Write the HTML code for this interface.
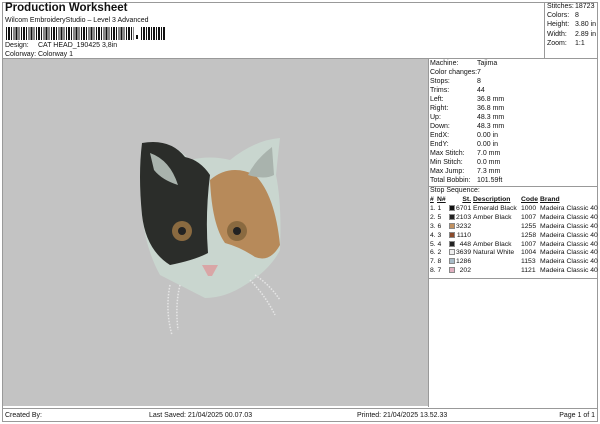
<!DOCTYPE html>
<html><head><style>
*{margin:0;padding:0;box-sizing:border-box}
body{width:600px;height:424px;background:#fff;font-family:"Liberation Sans",Arial,sans-serif;font-size:7px;color:#111;position:relative;overflow:hidden}
.a{position:absolute;white-space:nowrap}
.frame{position:absolute;left:2px;top:2px;width:596px;height:420px;border:1px solid #999}
.gray{position:absolute;left:3px;top:59px;width:425px;height:347px;background:#c3c3c3}
.r{position:absolute;white-space:nowrap;height:9px;line-height:9px}
.sw{position:absolute;width:6px;height:6px;border:1px solid #888;top:1px;left:19px}
</style></head><body>
<div class="frame"></div>
<div class="a" style="left:5px;top:2px;font-size:11.5px;font-weight:bold">Production Worksheet</div>
<div class="a" style="left:5px;top:17px">Wilcom EmbroideryStudio – Level 3 Advanced</div>
<div class="a" style="left:6px;top:27px;width:128px;height:13px;background:repeating-linear-gradient(90deg,#111 0 1px,#fff 1px 2px,#111 2px 4px,#fff 4px 5px,#111 5px 6px,#fff 6px 7.5px)"></div>
<div class="a" style="left:136px;top:35px;width:2px;height:4px;background:#111"></div>
<div class="a" style="left:141px;top:27px;width:25px;height:13px;background:repeating-linear-gradient(90deg,#111 0 1px,#fff 1px 2px,#111 2px 4px,#fff 4px 5px)"></div>
<div class="a" style="left:5px;top:42px">Design:</div><div class="a" style="left:38px;top:42px">CAT HEAD_190425 3,8in</div>
<div class="a" style="left:5px;top:51px">Colorway:</div><div class="a" style="left:38px;top:51px">Colorway 1</div>
<div class="a" style="left:544px;top:2px;width:1px;height:56px;background:#999"></div>
<div class="a" style="left:2px;top:58px;width:596px;height:1px;background:#999"></div>
<div style="position:absolute;left:547px;top:2px;line-height:9.2px">Stitches:<br>Colors:<br>Height:<br>Width:<br>Zoom:</div>
<div style="position:absolute;left:575px;top:2px;line-height:9.2px">18723<br>8<br>3.80 in<br>2.89 in<br>1:1</div>
<div class="gray"></div>
<div class="a" style="left:428px;top:59px;width:1px;height:348px;background:#999"></div>
<svg class="a" style="left:130px;top:135px" width="160" height="205" viewBox="0 0 160 205">
<path d="M12 8 Q8 40 12 80 Q16 115 30 140 L75 163 Q95 163 115 150 Q140 135 150 115 Q152 70 146 40 Q148 20 150 3 Q125 5 100 25 Q80 20 60 25 Q40 3 12 8Z" fill="#c9d6cf"/>
<path d="M12 8 Q8 40 12 80 Q16 115 40 130 Q65 125 78 118 Q75 80 80 40 Q70 25 55 22 Q40 3 12 8Z" fill="#2b2d2a"/>
<path d="M80 45 Q100 28 125 40 Q145 60 150 110 Q140 128 125 122 Q110 112 95 108 Q82 90 80 45Z" fill="#b78a5a"/>
<path d="M20 18 Q40 25 48 50 Q32 45 24 35Z" fill="#a9b3ad"/><path d="M142 12 Q125 25 118 40 Q135 45 144 40Z" fill="#a9b3ad"/>
<circle cx="52" cy="96" r="10" fill="#8a6a40"/><circle cx="52" cy="96" r="4" fill="#222"/>
<circle cx="107" cy="96" r="10" fill="#8a6a40"/><circle cx="107" cy="96" r="4" fill="#222"/>
<path d="M72 130 L88 130 L82 141 L78 141Z" fill="#d9a6a6"/>
<path d="M40 150 Q35 175 42 200 M50 150 Q45 170 48 195 M120 145 Q135 160 145 180 M125 140 Q140 150 150 165" stroke="#e6e6e6" stroke-width="1.5" fill="none" stroke-dasharray="1.5 1.5"/>
</svg>
<div style="position:absolute;left:430px;top:59px;line-height:9px">Machine:<br>Color changes:<br>Stops:<br>Trims:<br>Left:<br>Right:<br>Up:<br>Down:<br>EndX:<br>EndY:<br>Max Stitch:<br>Min Stitch:<br>Max Jump:<br>Total Bobbin:</div>
<div style="position:absolute;left:477px;top:59px;line-height:9px">Tajima<br>7<br>8<br>44<br>36.8 mm<br>36.8 mm<br>48.3 mm<br>48.3 mm<br>0.00 in<br>0.00 in<br>7.0 mm<br>0.0 mm<br>7.3 mm<br>101.59ft</div>
<div class="a" style="left:428px;top:186px;width:170px;height:1px;background:#999"></div>
<div class="a" style="left:430px;top:187px">Stop Sequence:</div>
<div style="position:absolute;left:430px;top:195px;width:168px;font-size:6.8px">
<div class="r" style="top:0;left:0;font-weight:bold;text-decoration:underline">#</div>
<div class="r" style="top:0;left:7px;font-weight:bold;text-decoration:underline">N#</div>
<div class="r" style="top:0;left:30px;width:11px;text-align:right;font-weight:bold;text-decoration:underline">St.</div>
<div class="r" style="top:0;left:43px;font-weight:bold;text-decoration:underline">Description</div>
<div class="r" style="top:0;left:91px;font-weight:bold;text-decoration:underline">Code</div>
<div class="r" style="top:0;left:110px;font-weight:bold;text-decoration:underline">Brand</div>
</div>
<div style="position:absolute;left:430px;top:204px;width:168px;font-size:6.8px">
<div style="position:relative;height:8.9px;line-height:8.9px"><span class="r" style="left:0">1. 1</span><span class="sw" style="background:#111"></span><span class="r" style="left:26px;width:15px;text-align:right">6701</span><span class="r" style="left:43px">Emerald Black</span><span class="r" style="left:91px">1000</span><span class="r" style="left:110px">Madeira Classic 40</span></div>
<div style="position:relative;height:8.9px;line-height:8.9px"><span class="r" style="left:0">2. 5</span><span class="sw" style="background:#222"></span><span class="r" style="left:26px;width:15px;text-align:right">2103</span><span class="r" style="left:43px">Amber Black</span><span class="r" style="left:91px">1007</span><span class="r" style="left:110px">Madeira Classic 40</span></div>
<div style="position:relative;height:8.9px;line-height:8.9px"><span class="r" style="left:0">3. 6</span><span class="sw" style="background:#c09060"></span><span class="r" style="left:26px;width:15px;text-align:right">3232</span><span class="r" style="left:91px">1255</span><span class="r" style="left:110px">Madeira Classic 40</span></div>
<div style="position:relative;height:8.9px;line-height:8.9px"><span class="r" style="left:0">4. 3</span><span class="sw" style="background:#8a4a2a"></span><span class="r" style="left:26px;width:15px;text-align:right">1110</span><span class="r" style="left:91px">1258</span><span class="r" style="left:110px">Madeira Classic 40</span></div>
<div style="position:relative;height:8.9px;line-height:8.9px"><span class="r" style="left:0">5. 4</span><span class="sw" style="background:#222"></span><span class="r" style="left:26px;width:15px;text-align:right">448</span><span class="r" style="left:43px">Amber Black</span><span class="r" style="left:91px">1007</span><span class="r" style="left:110px">Madeira Classic 40</span></div>
<div style="position:relative;height:8.9px;line-height:8.9px"><span class="r" style="left:0">6. 2</span><span class="sw" style="background:#eee"></span><span class="r" style="left:26px;width:15px;text-align:right">3639</span><span class="r" style="left:43px">Natural White</span><span class="r" style="left:91px">1004</span><span class="r" style="left:110px">Madeira Classic 40</span></div>
<div style="position:relative;height:8.9px;line-height:8.9px"><span class="r" style="left:0">7. 8</span><span class="sw" style="background:#a8bcc8"></span><span class="r" style="left:26px;width:15px;text-align:right">1286</span><span class="r" style="left:91px">1153</span><span class="r" style="left:110px">Madeira Classic 40</span></div>
<div style="position:relative;height:8.9px;line-height:8.9px"><span class="r" style="left:0">8. 7</span><span class="sw" style="background:#e0b0c0"></span><span class="r" style="left:26px;width:15px;text-align:right">202</span><span class="r" style="left:91px">1121</span><span class="r" style="left:110px">Madeira Classic 40</span></div>
</div>
<div class="a" style="left:428px;top:278px;width:170px;height:1px;background:#999"></div>
<div class="a" style="left:2px;top:408px;width:596px;height:1px;background:#999"></div>
<div class="a" style="left:5px;top:412px">Created By:</div>
<div class="a" style="left:149px;top:412px">Last Saved: 21/04/2025 00.07.03</div>
<div class="a" style="left:357px;top:412px">Printed: 21/04/2025 13.52.33</div>
<div class="a" style="right:5px;top:412px">Page 1 of 1</div>
</body></html>
